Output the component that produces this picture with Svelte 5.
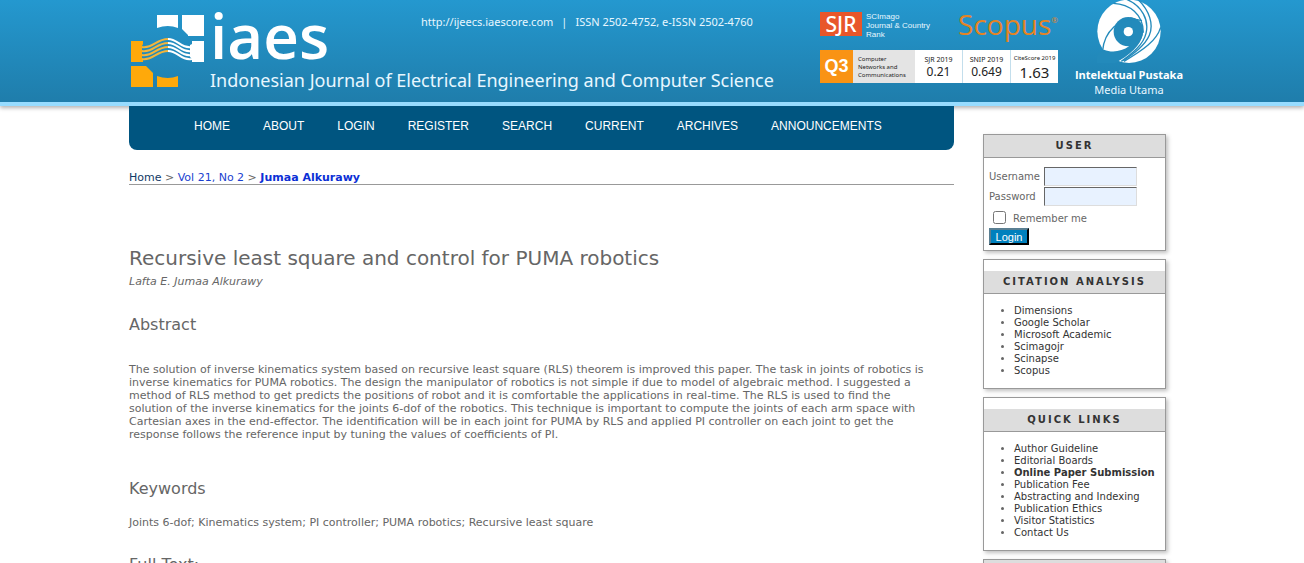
<script>
	const navItems = [
		'Home',
		'About',
		'Login',
		'Register',
		'Search',
		'Current',
		'Archives',
		'Announcements'
	];

	const metrics = [
		{ label: 'SJR 2019', value: '0.21' },
		{ label: 'SNIP 2019', value: '0.649' },
		{ label: 'CiteScore 2019', value: '1.63', big: true }
	];

	const linkBlocks = [
		{
			title: 'Citation Analysis',
			links: [
				{ name: 'Dimensions' },
				{ name: 'Google Scholar' },
				{ name: 'Microsoft Academic' },
				{ name: 'Scimagojr' },
				{ name: 'Scinapse' },
				{ name: 'Scopus' }
			]
		},
		{
			title: 'Quick Links',
			links: [
				{ name: 'Author Guideline' },
				{ name: 'Editorial Boards' },
				{ name: 'Online Paper Submission', strong: true },
				{ name: 'Publication Fee' },
				{ name: 'Abstracting and Indexing' },
				{ name: 'Publication Ethics' },
				{ name: 'Visitor Statistics' },
				{ name: 'Contact Us' }
			]
		}
	];

	let username = $state('');
	let password = $state('');
	let remember = $state(false);
</script>

<div class="page">
	<header class="header">
		<div class="container header-inner">
			<svg class="mark" viewBox="131 15 73 72" aria-hidden="true">
				<g fill="#fff">
					<path d="M157 15H178V28Q168 24 157 28Z" />
					<path d="M182 15H204V36H188V35L182 29Z" />
					<path d="M192 41H204V62H192V59L190 57V45L192 44Z" />
				</g>
				<g fill="#ffa90a">
					<path d="M131 41H143V44L142 46V58L143 60V62H131Z" />
					<path d="M131 66H146L153 73V87H131Z" />
					<path d="M157 76Q168 80 178 76V87H157Z" />
				</g>
				<g fill="none" stroke-width="2">
					{#each [0, 4, 8, 12] as dy}
						<path
							stroke="#f3b53a"
							d={`M142 ${47 + dy}C153 ${49 + dy} 156 ${39 + dy} 168 ${39 + dy}`}
						/>
						<path
							stroke="#fff"
							d={`M168 ${39 + dy}C178 ${39 + dy} 181 ${49 + dy} 192 ${47 + dy}`}
						/>
					{/each}
				</g>
			</svg>

			<div class="brand">
				<div class="brand-top">
					<span class="wordmark">iaes</span>
					<p class="issn">
						<span>http://ijeecs.iaescore.com</span>
						<span>|</span>
						<span>ISSN 2502-4752, e-ISSN 2502-4760</span>
					</p>
				</div>
				<p class="journal">
					Indonesian Journal of Electrical Engineering and Computer Science
				</p>
			</div>

			<div class="ratings">
				<div class="indexers">
					<span class="sjr">SJR</span>
					<span class="scimago">SCImago<br />Journal &amp; Country<br />Rank</span>
					<span class="scopus">Scopus<sup>®</sup></span>
				</div>
				<div class="metrics">
					<span class="quartile">Q3</span>
					<span class="subject">Computer<br />Networks and<br />Communications</span>
					{#each metrics as metric}
						<span class="metric" class:big={metric.big}>
							<small>{metric.label}</small>
							<b>{metric.value}</b>
						</span>
					{/each}
				</div>
			</div>

			<div class="publisher">
				<svg viewBox="12 0 190 189" aria-hidden="true">
					<circle cx="107" cy="94" r="95" fill="#fff" />
					<g fill="#238abb">
						<circle cx="105" cy="95" r="44" />
						<path
							d="M110 52C132 54 147 66 149 86C152 120 128 154 76 183L50 200L-10 190L20 156L32 149C54 158 84 156 108 138L120 100Z"
						/>
					</g>
					<g fill="none" stroke="#238abb" stroke-width="4">
						<path d="M28 152C32 100 74 44 146 62" />
						<path d="M60 10C108 12 150 42 150 98" />
						<path d="M100 -2C146 18 168 60 158 100C150 134 118 160 84 184" />
						<path d="M134 -2C168 32 182 72 168 106C154 138 122 160 90 182" />
						<path d="M202 82C190 122 150 150 92 184" />
					</g>
					<circle cx="105" cy="95" r="14" fill="#fff" />
				</svg>
				<strong>Intelektual Pustaka</strong>
				<span>Media Utama</span>
			</div>
		</div>
	</header>

	<div class="container columns">
		<main>
			<nav class="navbar">
				{#each navItems as item}
					<a href="#top">{item}</a>
				{/each}
			</nav>

			<div class="breadcrumb">
				<a class="home" href="#top">Home</a> &gt;
				<a href="#top">Vol 21, No 2</a> &gt;
				<a class="current" href="#top">Jumaa Alkurawy</a>
			</div>

			<h1>Recursive least square and control for PUMA robotics</h1>
			<p class="author">Lafta E. Jumaa Alkurawy</p>

			<h2>Abstract</h2>
			<p class="abstract">
				The solution of inverse kinematics system based on recursive least square (RLS) theorem is
				improved this paper. The task in joints of robotics is inverse kinematics for PUMA robotics.
				The design the manipulator of robotics is not simple if due to model of algebraic method. I
				suggested a method of RLS method to get predicts the positions of robot and it is
				comfortable the applications in real-time. The RLS is used to find the solution of the
				inverse kinematics for the joints 6-dof of the robotics. This technique is important to
				compute the joints of each arm space with Cartesian axes in the end-effector. The
				identification will be in each joint for PUMA by RLS and applied PI controller on each joint
				to get the response follows the reference input by tuning the values of coefficients of PI.
			</p>

			<h2>Keywords</h2>
			<p class="keywords">
				Joints 6-dof; Kinematics system; PI controller; PUMA robotics; Recursive least square
			</p>

			<h2>Full Text:</h2>
		</main>

		<aside class="sidebar">
			<section class="block">
				<h3>User</h3>
				<form class="login" onsubmit={(e) => e.preventDefault()}>
					<label for="username">Username</label>
					<input id="username" type="text" bind:value={username} />
					<label for="password">Password</label>
					<input id="password" type="password" bind:value={password} />
					<div class="remember">
						<input id="remember" type="checkbox" bind:checked={remember} />
						<label for="remember">Remember me</label>
					</div>
					<button type="submit">Login</button>
				</form>
			</section>

			{#each linkBlocks as block}
				<section class="block spaced">
					<h3>{block.title}</h3>
					<ul>
						{#each block.links as link}
							<li><a href="#top" class:strong={link.strong}>{link.name}</a></li>
						{/each}
					</ul>
				</section>
			{/each}

			<section class="block">
				<h3>&nbsp;</h3>
			</section>
		</aside>
	</div>
</div>

<style>
	:global(body) {
		background: #fff;
	}

	.page {
		height: 100vh;
		overflow: hidden;
		color: #666;
		font: 11px/13px Verdana, 'DejaVu Sans', sans-serif;
	}

	p,
	h1,
	h2,
	h3,
	ul {
		margin: 0;
	}

	a {
		text-decoration: none;
	}

	.container {
		max-width: 1046px;
		margin: 0 auto;
	}

	/* Header banner */
	.header {
		background: linear-gradient(#2498cf, #1f7dab);
		border-bottom: 4px solid #97dcff;
		box-shadow: 0 2px 4px rgba(0, 0, 0, 0.3);
		color: #e8f7ff;
		font-family: 'Segoe UI', 'Noto Sans', sans-serif;
	}

	.header-inner {
		display: flex;
		height: 102px;
	}

	.mark {
		flex: none;
		width: 73px;
		height: 72px;
		margin: 15px 6px 0 2px;
	}

	.brand {
		flex: 1;
		white-space: nowrap;
	}

	.brand-top {
		display: flex;
		height: 68px;
	}

	.wordmark {
		width: 211px;
		color: #fff;
		font: 600 62px/70px 'Open Sans', sans-serif;
	}

	.issn {
		display: flex;
		gap: 8px;
		padding-top: 14px;
		font-size: 11px;
		line-height: 16px;
	}

	.journal {
		font-size: 18px;
		line-height: 24px;
	}

	.ratings {
		flex: none;
		width: 238px;
		padding-top: 12px;
	}

	.indexers {
		display: flex;
		height: 38px;
	}

	.sjr {
		width: 42px;
		height: 24px;
		background: #e8562a;
		color: #fff;
		font-size: 21px;
		font-weight: 500;
		line-height: 24px;
		text-align: center;
	}

	.scimago {
		flex: 1;
		padding-left: 4px;
		font: 8px/9px 'Liberation Sans', Arial, sans-serif;
	}

	.scopus {
		color: #e58425;
		font-family: 'Open Sans', sans-serif;
		font-size: 28px;
		font-weight: 500;
		line-height: 24px;
	}

	.scopus sup {
		font-size: 8px;
		line-height: 8px;
		vertical-align: 12px;
	}

	.metrics {
		display: grid;
		grid-template-columns: 33px 62px 48px 48px 47px;
		height: 33px;
		background: #fff;
		color: #222;
	}

	.quartile {
		background: #f99314;
		color: #fff;
		font: bold 18px/33px 'Liberation Sans', Arial, sans-serif;
		text-align: center;
	}

	.subject {
		padding: 5px 0 0 5px;
		background: #e4e4e4;
		font-size: 6px;
		line-height: 8px;
		white-space: nowrap;
	}

	.metric {
		display: flex;
		flex-direction: column;
		align-items: center;
		padding-top: 5px;
		border-right: 1px solid #c3deec;
		white-space: nowrap;
	}

	.metric small {
		font-size: 7px;
		line-height: 9px;
	}

	.metric b {
		font-size: 12px;
		font-weight: normal;
		line-height: 15px;
	}

	.metric.big {
		padding-top: 4px;
		border-right: 0;
	}

	.metric.big small {
		font-size: 6px;
	}

	.metric.big b {
		font-size: 15px;
		line-height: 18px;
	}

	.publisher {
		display: flex;
		flex: none;
		flex-direction: column;
		align-items: center;
		width: 106px;
		margin: 0 -7px 0 18px;
		font-size: 11px;
		line-height: 15px;
		white-space: nowrap;
	}

	.publisher svg {
		width: 64px;
		height: 63px;
		margin-bottom: 4px;
	}

	.publisher strong {
		color: #fff;
		font-family: 'Open Sans', sans-serif;
	}

	/* Page columns */
	.columns {
		display: flex;
		gap: 29px;
	}

	main {
		flex: 1;
	}

	.navbar {
		position: relative;
		display: flex;
		gap: 33px;
		padding: 0 65px;
		border-radius: 0 0 8px 8px;
		background: #005580;
	}

	.navbar a {
		color: #fff;
		font: 12px/40px 'Liberation Sans', Arial, sans-serif;
		padding-bottom: 4px;
		text-transform: uppercase;
		white-space: nowrap;
	}

	.breadcrumb {
		margin-top: 22px;
		border-bottom: 1px solid #999;
		line-height: 12px;
	}

	.breadcrumb a {
		color: #1a3fd0;
	}

	.breadcrumb .home {
		color: #123a66;
	}

	.breadcrumb .current {
		color: #0c2fd6;
		font-weight: bold;
	}

	h1 {
		margin-top: 61px;
		font-size: 20px;
		font-weight: normal;
		line-height: 24px;
	}

	.author {
		margin-top: 5px;
		font-style: italic;
	}

	h2 {
		font-size: 16px;
		font-weight: normal;
		line-height: 20px;
	}

	.author + h2 {
		margin-top: 27px;
	}

	.abstract {
		margin: 28px 0 38px;
		padding-right: 22px;
	}

	.keywords {
		margin: 17px 0 26px;
	}

	/* Sidebar */
	.sidebar {
		display: flex;
		flex: none;
		flex-direction: column;
		gap: 8px;
		width: 183px;
		margin-right: 9px;
		padding-top: 28px;
		font-size: 10px;
		line-height: 12px;
	}

	.block {
		border: 1px solid #999;
		background: #fff;
		box-shadow: 2px 2px 4px rgba(0, 0, 0, 0.25);
	}

	.block.spaced {
		padding-top: 11px;
	}

	.block h3 {
		border-bottom: 1px solid #999;
		background: #ddd;
		color: #333;
		font-size: 10px;
		letter-spacing: 2px;
		line-height: 22px;
		text-align: center;
		text-transform: uppercase;
	}

	.block ul {
		padding: 11px 0 11px 30px;
	}

	.block li a {
		color: #333;
		white-space: nowrap;
	}

	.block li a.strong {
		font-weight: bold;
	}

	.login {
		display: grid;
		grid-template-columns: 53px 93px;
		gap: 1px 2px;
		align-items: center;
		padding: 9px 5px 5px;
	}

	.login input:not([type='checkbox']) {
		box-sizing: border-box;
		width: 93px;
		height: 19px;
		padding: 1px 2px;
		border: 1px solid;
		border-color: #666 #ddd #ddd #666;
		background: #e8f2ff;
		font-size: 10px;
	}

	.remember {
		display: flex;
		grid-column: 1 / -1;
		gap: 7px;
		height: 20px;
		align-items: center;
	}

	.remember input {
		width: 13px;
		height: 13px;
		margin: 0 0 0 4px;
	}

	.remember label {
		padding-top: 4px;
	}

	.login button {
		width: 40px;
		height: 17px;
		padding: 0;
		border: 2px outset #0a6a9c;
		border-color: #5a7f92 #10222c #10222c #5a7f92;
		background: #0080bd;
		color: #fff;
		font: 11px/12px 'Liberation Sans', Arial, sans-serif;
	}
</style>
